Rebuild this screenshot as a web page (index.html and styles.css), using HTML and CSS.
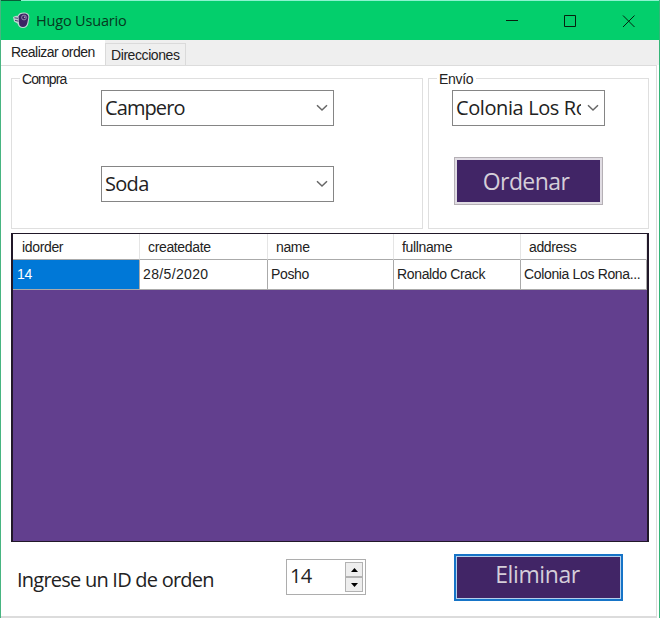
FILE: index.html
```html
<!DOCTYPE html>
<html lang="es">
<head>
<meta charset="utf-8">
<title>Hugo Usuario</title>
<link rel="stylesheet" href="styles.css">
</head>
<body>
<div class="window">
  <header class="titlebar">
    <svg class="logo" width="18" height="17" viewBox="0 0 18 17">
      <path d="M4.500 4C5.500 1.500 7.500.5 10.500.5c4 0 6 1.500 5.800 4.500L15.500 11c-.7 3.200-2.500 5-5.500 5-3.200 0-5-2-5.500-4.500L1 9.500 0 5l3-1.200z" fill="#bfd5d2"/>
      <path d="M5.500 4.500C6.500 2.500 8 1.500 11 1.500c3 0 4.800 1.500 4.300 4.500l-1 5c-.6 2.700-2.100 4-4.300 4-2.500 0-4-1.500-4-4z" fill="#3b2564"/>
      <path d="M1.500 5.800l3.500.5M2 8.300l3.500.9" stroke="#4b3970" fill="none"/>
      <circle cx="11" cy="5.500" r="2.400" fill="#3b2564" stroke="#a99abd" stroke-width=".8"/>
      <circle cx="11.800" cy="5.200" r=".6" fill="#fff"/>
    </svg>
    <h1 class="title"><span>Hugo Usuario</span></h1>
    <svg class="controls" width="132" height="14" viewBox="0 0 132 14">
      <path d="M2 6.500h12M60.500 1.500h11v11h-11zM119 1.500l11.500 11.500M130.500 1.500l-11.500 11.500" fill="none" stroke="#06210f" stroke-width="1"/>
    </svg>
  </header>
  <nav class="tabs">
    <div class="tab active"><span>Realizar orden</span></div>
    <div class="tab"><span>Direcciones</span></div>
  </nav>
  <main class="page">
    <div class="groups">
      <section class="group purchase">
        <h2 class="legend"><span>Compra</span></h2>
        <div class="combo"><span class="value">Campero</span><svg class="chevron" width="12" height="8" viewBox="0 0 12 8"><path d="M1 1.300l5 4.700 5-4.700"/></svg></div>
        <div class="combo"><span class="value soda">Soda</span><svg class="chevron" width="12" height="8" viewBox="0 0 12 8"><path d="M1 1.300l5 4.700 5-4.700"/></svg></div>
      </section>
      <section class="group shipping">
        <h2 class="legend"><span>Envío</span></h2>
        <div class="combo"><span class="value colonia">Colonia Los Ro</span><svg class="chevron" width="12" height="8" viewBox="0 0 12 8"><path d="M1 1.300l5 4.700 5-4.700"/></svg></div>
        <div class="button order"><span>Ordenar</span></div>
      </section>
    </div>
    <div class="datagrid">
      <div class="row head">
        <div><span>idorder</span></div><div><span>createdate</span></div><div><span>name</span></div><div><span>fullname</span></div><div><span>address</span></div>
      </div>
      <div class="row">
        <div class="selected"><span>14</span></div><div><span class="date">28/5/2020</span></div><div><span>Posho</span></div><div><span class="person">Ronaldo Crack</span></div><div><span class="place">Colonia Los Rona...</span></div>
      </div>
    </div>
    <footer class="actions">
      <label class="prompt"><span>Ingrese un ID de orden</span></label>
      <div class="spinner">
        <span class="number">14</span>
        <div class="steps">
          <div><svg width="7" height="4" viewBox="0 0 7 4"><path d="M3.500 0L7 4H0z"/></svg></div>
          <div><svg width="7" height="4" viewBox="0 0 7 4"><path d="M3.500 4L7 0H0z"/></svg></div>
        </div>
      </div>
      <div class="button remove"><span>Eliminar</span></div>
    </footer>
  </main>
</div>
</body>
</html>
```
FILE: styles.css
```css
* { box-sizing: border-box; }
body { margin: 0; font-family: "Liberation Sans", Arial, sans-serif; color: #222; }
h1, h2 { margin: 0; font-weight: 400; }
svg { display: block; flex: none; }
.window {
  width: 660px; height: 618px; overflow: hidden;
  display: flex; flex-direction: column;
  background: #fff;
  border-left: 1px solid #48b581;
  border-right: 1px solid #35b578;
}
.titlebar {
  height: 40px; flex: none; margin: 0 -1px;
  display: flex; align-items: center;
  padding: 1px 24px 0 13px;
  background: linear-gradient(90deg, #075f38 21px, #8df3cf 21px) top / 100% 1px no-repeat #03cf6c;
}
.logo { margin: 0 5px 0 0; }
.title { flex: 1; font: 14.500px/20px "Open Sans", sans-serif; color: #06381f; letter-spacing: -.18px; }
.tabs { height: 25px; flex: none; display: flex; background: #efefef; font-size: 14px; line-height: 16px; }
.tab { width: 81px; height: 22px; margin-top: 3px; padding: 3px 0 0 5px; border: 1px solid #dadada; border-bottom: 0; white-space: nowrap; letter-spacing: -.42px; }
.tab.active { width: 104px; height: 26px; margin-top: 0; padding: 4px 0 0 10px; background: #fff; border: 0; letter-spacing: -.52px; }
.page {
  flex: 1; min-height: 0; margin-right: 2px; padding: 12px 7px 0 10px;
  border: solid #dcdcdc; border-width: 1px 1px 2px 0;
  display: flex; flex-direction: column;
}
.groups { display: flex; gap: 5px; height: 151px; flex: none; }
.group { border: 1px solid #dfdfdf; }
.purchase { width: 412px; padding-left: 89px; }
.shipping { width: 221px; padding-left: 23px; }
.legend { height: 18px; margin-top: -8px; font-size: 14px; line-height: 16px; }
.legend span { display: inline-block; background: #fff; padding: 0 3px 0 2px; letter-spacing: -.9px; }
.purchase .legend { margin-left: -81px; }
.shipping .legend { margin-left: -15px; }
.shipping .legend span { letter-spacing: -.3px; }
.combo {
  width: 233px; height: 36px; margin-top: 1px; padding: 0 5px 0 3px;
  border: 1px solid #858585; background: #fff;
  display: flex; align-items: center; justify-content: space-between;
  font: 20px/34px "Open Sans", sans-serif;
}
.combo + .combo { margin-top: 40px; }
.shipping .combo { width: 153px; }
.value { overflow: hidden; white-space: nowrap; letter-spacing: -.9px; }
.soda { letter-spacing: -.7px; }
.colonia { width: 125px; letter-spacing: -.4px; }
.chevron path { fill: none; stroke: #666; stroke-width: 1.500; }
.button {
  display: flex; justify-content: center;
  background: #412566; color: #d5ced9;
  font: 23px/42px "Open Sans", sans-serif; letter-spacing: -.4px;
}
.order { width: 149px; height: 48px; margin: 31px 0 0 2px; border: 1px solid #b5b0b5; box-shadow: inset 0 0 0 2px #e0dce3; padding-right: 5px; line-height: 47px; letter-spacing: -.6px; }
.datagrid { height: 309px; flex: none; margin-top: 4px; width: 638px; background: #623f8e; border: 2px solid #211829; border-width: 1px 2px 1px; }
.row { display: grid; grid-template-columns: 127px 128px 126px 127px 1fr; height: 30px; font-size: 14px; line-height: 29px; background: #fff; }
.row > div { border: solid #aaa; border-width: 0 1px 1px 0; padding-left: 3px; white-space: nowrap; letter-spacing: -.35px; }
.row.head { height: 26px; line-height: 23px; }
.head > div { border-right-color: #e5e5e5; padding: 2px 0 0 8px; }
.head > div:first-child { padding-left: 9px; }
.row > .selected { background: #0078d7; color: #fff; padding-left: 4px; }
.date { letter-spacing: .35px; }
.actions { display: flex; flex: 1; align-items: flex-start; }
.prompt { width: 275px; padding: 24px 0 0 6px; font: 20px/28px "Open Sans", sans-serif; white-space: nowrap; letter-spacing: -.77px; }
.spinner { width: 80px; height: 36px; margin-top: 17px; border: 1px solid #adadad; display: flex; justify-content: space-between; padding: 1px 2px 1px 3px; font: 20px/32px "Open Sans", sans-serif; letter-spacing: -.8px; }
.number { margin-top: -1px; }
.steps { width: 18px; display: grid; grid-template-rows: 15px 15px; align-content: center; }
.steps > div { border: 1px solid #b2b2b2; background: #eee; display: grid; place-items: center; }
.remove { width: 169px; height: 47px; margin: 12px 0 0 88px; border: 2px solid #1674c7; box-shadow: inset 0 0 0 1px #b4cfec; line-height: 37px; padding-right: 2px; }
```
